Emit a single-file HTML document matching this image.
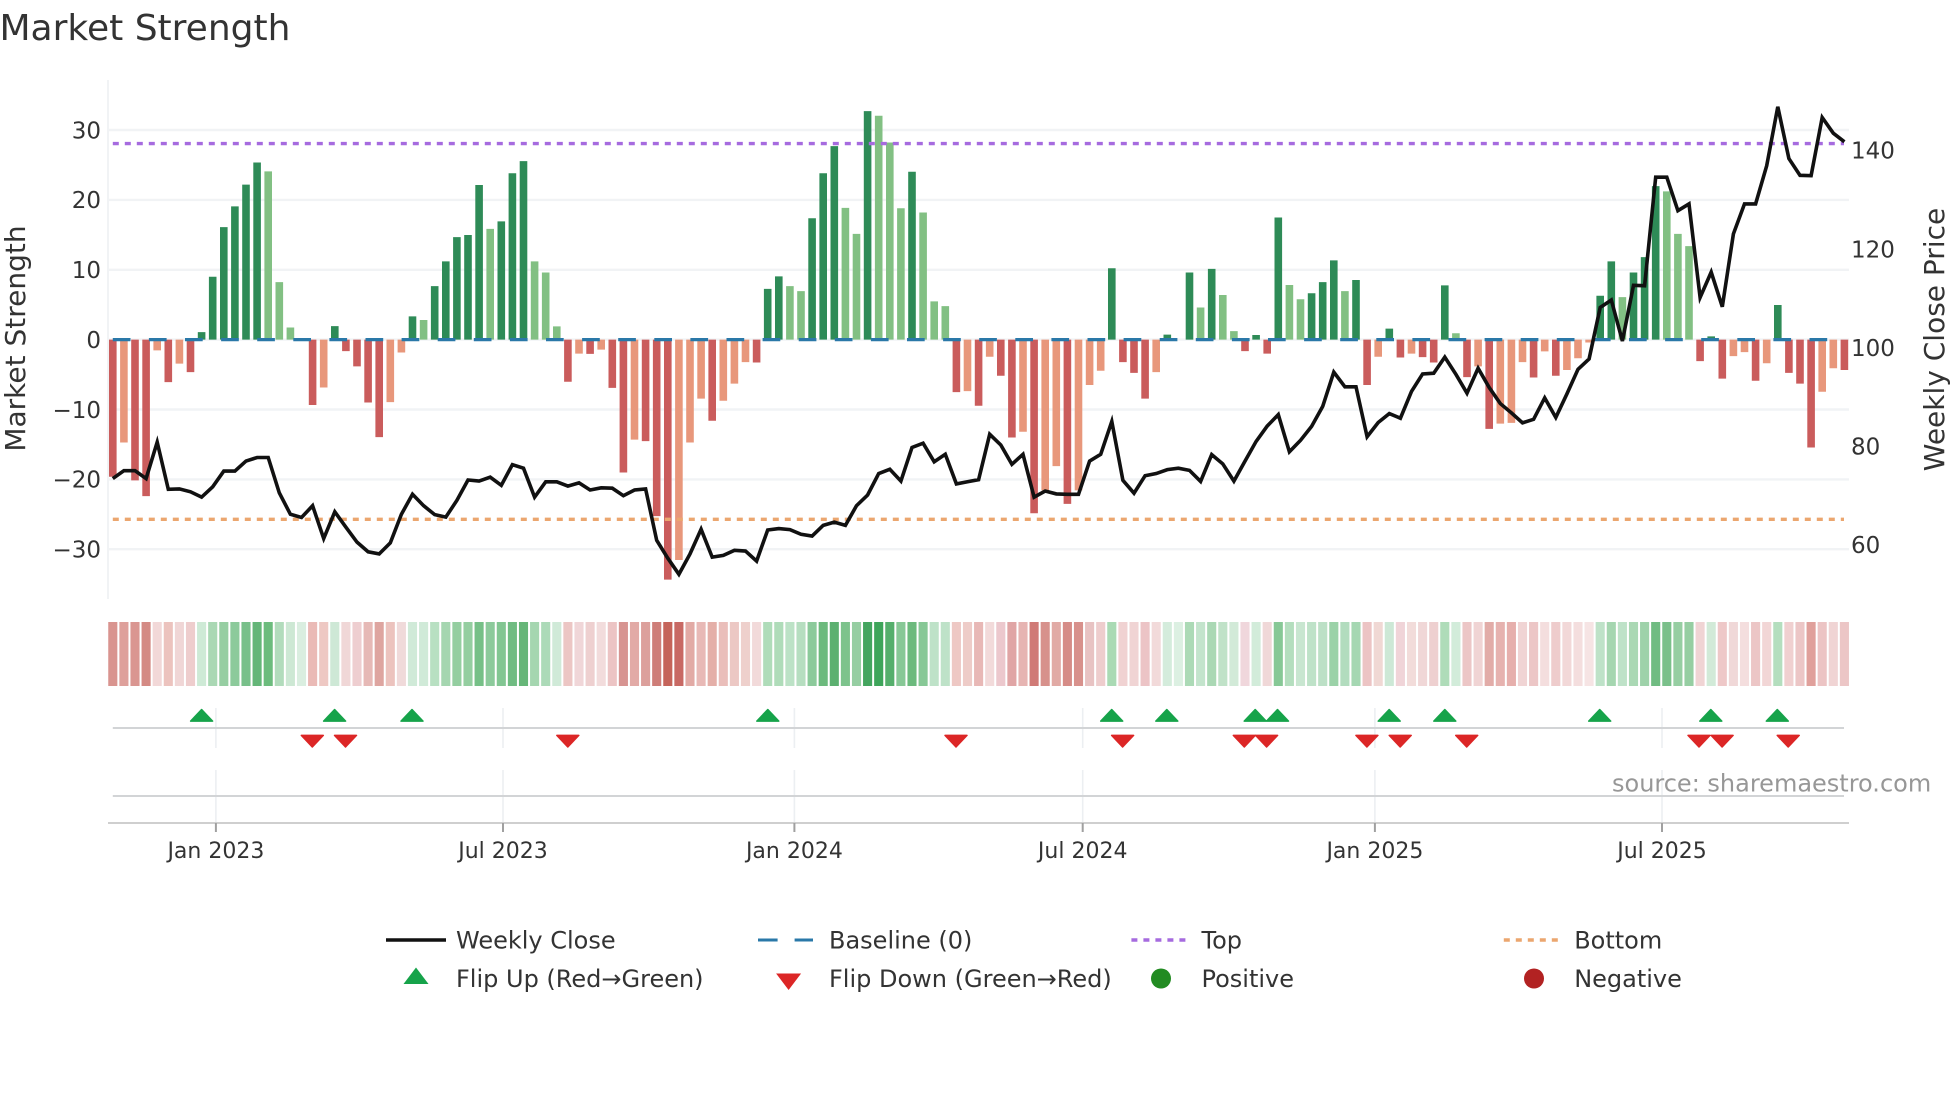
<!DOCTYPE html>
<html lang="en"><head><meta charset="utf-8"><title>Market Strength</title>
<style>
html,body{margin:0;padding:0;background:#fff}
svg{display:block}
text{font-family:"DejaVu Sans",sans-serif;fill:#333}
.t{font-size:23px}
.x{font-size:22px;text-anchor:middle}
.l{font-size:24px}
</style></head><body>
<svg width="1960" height="1102" viewBox="0 0 1960 1102" xmlns="http://www.w3.org/2000/svg">
<rect width="1960" height="1102" fill="#fff"/>
<text x="-0.5" y="40" style="font-size:36px">Market Strength</text>

<!-- grid -->
<path d="M108 130H1849M108 199.9H1849M108 269.8H1849M108 339.6H1849M108 409.5H1849M108 479.4H1849M108 549.2H1849" stroke="#f1f3f5" stroke-width="2.4" fill="none"/>
<path d="M108 80V599" stroke="#f1f3f5" stroke-width="2" fill="none"/>

<!-- bars -->
<g transform="matrix(11.1 0 0 .35714 112.8 60)" fill="none" stroke-width=".685">
<path stroke="#2e8b57" d="M8 783V762M9 783V607M10 783V468M11 783V410M12 783V349M13 783V287M20 783V745M27 783V718M29 783V633M30 783V564M31 783V496M32 783V490M33 783V350M35 783V452M36 783V317M37 783V283M59 783V641M60 783V606M63 783V443M64 783V317M65 783V241M68 783V143M72 783V313M90 783V583M95 783V769M97 783V595M99 783V585M103 783V770M105 783V441M108 783V653M109 783V622M110 783V561M112 783V616M115 783V752M120 783V631M134 783V660M135 783V564M137 783V595M138 783V552M139 783V353M144 783V774M150 783V686"/>
<path stroke="#82c083" d="M14 783V312M15 783V622M16 783V749M28 783V728M34 783V473M38 783V564M39 783V595M40 783V746M61 783V633M62 783V647M66 783V414M67 783V487M69 783V156M70 783V231M71 783V415M73 783V427M74 783V676M75 783V689M98 783V693M100 783V658M101 783V759M106 783V630M107 783V670M111 783V647M121 783V765M136 783V664M140 783V368M141 783V487M142 783V521"/>
<path stroke="#ca5c5c" d="M0 783V1167M2 783V1177M3 783V1221M5 783V902M7 783V874M18 783V966M21 783V815M22 783V858M23 783V959M24 783V1056M41 783V901M43 783V823M45 783V918M46 783V1155M48 783V1067M49 783V1277M50 783V1455M54 783V1010M58 783V847M76 783V930M78 783V968M80 783V884M81 783V1057M83 783V1269M86 783V1243M91 783V846M92 783V876M93 783V948M102 783V815M104 783V822M113 783V910M116 783V833M118 783V832M119 783V847M122 783V888M124 783V1033M128 783V889M130 783V884M143 783V843M145 783V892M148 783V898M151 783V876M152 783V906M153 783V1085M156 783V868"/>
<path stroke="#e8977b" d="M1 783V1071M4 783V813M6 783V850M19 783V917M25 783V958M26 783V819M42 783V822M44 783V811M47 783V1063M51 783V1400M52 783V1071M53 783V948M55 783V954M56 783V906M57 783V846M77 783V927M79 783V831M82 783V1041M84 783V1205M85 783V1137M87 783V1205M88 783V910M89 783V870M94 783V874M114 783V831M117 783V822M123 783V858M125 783V1018M126 783V1016M127 783V846M129 783V816M131 783V868M132 783V835M133 783V791M146 783V829M147 783V818M149 783V849M154 783V929M155 783V863"/>
</g>

<!-- reference lines -->
<path d="M112.8 339.6H1844" stroke="#2a78a8" stroke-width="3.2" stroke-dasharray="17.7 18.4" fill="none"/>
<path d="M112.8 143.6H1844" stroke="#a66bdf" stroke-width="3.4" stroke-dasharray="6 6" fill="none"/>
<path d="M112.8 519.3H1844" stroke="#eba66f" stroke-width="3.4" stroke-dasharray="6 6" fill="none"/>

<!-- price line -->
<g transform="matrix(11.1 0 0 .35714 112.8 60)">
<polyline fill="none" stroke="#111" stroke-width="3.6" stroke-linejoin="miter" vector-effect="non-scaling-stroke" points="0,1172 1,1150 2,1150 3,1172 4,1070 5,1202 6,1201 7,1209 8,1224 9,1195 10,1151 11,1151 12,1123 13,1113 14,1113 15,1212 16,1272 17,1281 18,1248 19,1340 20,1265 21,1308 22,1350 23,1377 24,1383 25,1352 26,1272 27,1216 28,1248 29,1273 30,1280 31,1233 32,1176 33,1179 34,1168 35,1191 36,1133 37,1143 38,1224 39,1181 40,1181 41,1193 42,1184 43,1204 44,1198 45,1199 46,1220 47,1204 48,1201 49,1345 50,1395 51,1440 52,1383 53,1314 54,1392 55,1387 56,1373 57,1375 58,1403 59,1316 60,1312 61,1315 62,1328 63,1333 64,1303 65,1294 66,1303 67,1248 68,1218 69,1158 70,1146 71,1179 72,1085 73,1073 74,1125 75,1104 76,1187 77,1181 78,1175 79,1048 80,1078 81,1132 82,1104 83,1224 84,1207 85,1215 86,1216 87,1216 88,1123 89,1104 90,1012 91,1177 92,1213 93,1164 94,1158 95,1147 96,1143 97,1149 98,1180 99,1105 100,1131 101,1179 102,1123 103,1068 104,1025 105,993 106,1097 107,1065 108,1026 109,970 110,874 111,915 112,915 113,1055 114,1015 115,990 116,1003 117,928 118,879 119,877 120,832 121,880 122,933 123,863 124,917 125,962 126,988 127,1016 128,1006 129,946 130,1001 131,935 132,866 133,837 134,693 135,672 136,787 137,631 138,632 139,328 140,328 141,422 142,403 143,665 144,594 145,691 146,487 147,403 148,403 149,296 150,131 151,276 152,323 153,324 154,161 155,205 156,229"/>
</g>

<!-- left ticks -->
<g class="t" text-anchor="end">
<text class="t" x="101" y="138.3">30</text>
<text class="t" x="101" y="208.2">20</text>
<text class="t" x="101" y="278.1">10</text>
<text class="t" x="101" y="347.9">0</text>
<text class="t" x="101" y="417.8">−10</text>
<text class="t" x="101" y="487.7">−20</text>
<text class="t" x="101" y="557.5">−30</text>
</g>
<!-- right ticks -->
<text class="t" x="1851" y="158.6">140</text>
<text class="t" x="1851" y="257.6">120</text>
<text class="t" x="1851" y="355.8">100</text>
<text class="t" x="1851" y="454.7">80</text>
<text class="t" x="1851" y="553">60</text>
<!-- axis titles -->
<text transform="translate(25 338.5) rotate(-90)" text-anchor="middle" style="font-size:28px">Market Strength</text>
<text transform="translate(1944 339.5) rotate(-90)" text-anchor="middle" style="font-size:28px">Weekly Close Price</text>

<!-- heat strip -->
<g transform="matrix(11.1 0 0 64 112.8 622)" fill="none" stroke-width=".82">
<path stroke="#d9948f" d="M0 0V1"/><path stroke="#dea09b" d="M1 0V1"/><path stroke="#da9691" d="M2 0V1"/><path stroke="#d48a84" d="M3 0V1"/><path stroke="#f2d8d8" d="M4 0V1"/><path stroke="#ecc3be" d="M5 0V1"/><path stroke="#f0d6d6" d="M6 0V1"/><path stroke="#eecdcd" d="M7 0V1"/>
<path stroke="#ceead6" d="M8 0V1"/><path stroke="#aad8b4" d="M9 0V1"/><path stroke="#96cea2" d="M10 0V1"/><path stroke="#8cca9b" d="M11 0V1"/><path stroke="#78c08a" d="M12 0V1"/><path stroke="#64b678" d="M13 0V1"/><path stroke="#6cbc7d" d="M14 0V1"/><path stroke="#b2dcbc" d="M15 0V1"/><path stroke="#cde8d4" d="M16 0V1"/><path stroke="#daeee0" d="M17 0V1"/>
<path stroke="#eabab6" d="M18 0V1"/><path stroke="#eec8c3" d="M19 0V1"/><path stroke="#cee8d6" d="M20 0V1"/><path stroke="#f0d7d7" d="M21 0V1"/><path stroke="#eeced0" d="M22 0V1"/><path stroke="#e6b9b6" d="M23 0V1"/><path stroke="#dea5a0" d="M24 0V1"/><path stroke="#ecc3be" d="M25 0V1"/><path stroke="#f0dada" d="M26 0V1"/>
<path stroke="#d0ead8" d="M27 0V1"/><path stroke="#d0ead8" d="M28 0V1"/><path stroke="#b8e0c2" d="M29 0V1"/><path stroke="#a5d6b0" d="M30 0V1"/><path stroke="#94cea0" d="M31 0V1"/><path stroke="#94cea0" d="M32 0V1"/><path stroke="#76c087" d="M33 0V1"/><path stroke="#8cca9b" d="M34 0V1"/><path stroke="#82c692" d="M35 0V1"/><path stroke="#70bc82" d="M36 0V1"/><path stroke="#66b678" d="M37 0V1"/><path stroke="#a5d6b0" d="M38 0V1"/><path stroke="#acdab8" d="M39 0V1"/><path stroke="#d0ead8" d="M40 0V1"/>
<path stroke="#ecc6c4" d="M41 0V1"/><path stroke="#f0d6d8" d="M42 0V1"/><path stroke="#eed0d0" d="M43 0V1"/><path stroke="#f2dcdc" d="M44 0V1"/><path stroke="#ecc4c4" d="M45 0V1"/><path stroke="#d79491" d="M46 0V1"/><path stroke="#e2aaa6" d="M47 0V1"/><path stroke="#dca09c" d="M48 0V1"/><path stroke="#ce7d78" d="M49 0V1"/><path stroke="#c5645a" d="M50 0V1"/><path stroke="#c86964" d="M51 0V1"/><path stroke="#e2aaa5" d="M52 0V1"/><path stroke="#e8b9b6" d="M53 0V1"/><path stroke="#e4afa8" d="M54 0V1"/><path stroke="#eabeba" d="M55 0V1"/><path stroke="#ecc8c4" d="M56 0V1"/><path stroke="#eed0cc" d="M57 0V1"/><path stroke="#f2dada" d="M58 0V1"/>
<path stroke="#afdcb9" d="M59 0V1"/><path stroke="#afdcb9" d="M60 0V1"/><path stroke="#bce2c6" d="M61 0V1"/><path stroke="#b6dec0" d="M62 0V1"/><path stroke="#8cca9b" d="M63 0V1"/><path stroke="#6cba7d" d="M64 0V1"/><path stroke="#5cb070" d="M65 0V1"/><path stroke="#7dc38c" d="M66 0V1"/><path stroke="#96cea2" d="M67 0V1"/><path stroke="#44a55f" d="M68 0V1"/><path stroke="#3ea55a" d="M69 0V1"/><path stroke="#55af6c" d="M70 0V1"/><path stroke="#87c896" d="M71 0V1"/><path stroke="#6cba7d" d="M72 0V1"/><path stroke="#87c896" d="M73 0V1"/><path stroke="#bee2c8" d="M74 0V1"/><path stroke="#bee2c8" d="M75 0V1"/>
<path stroke="#eec8c4" d="M76 0V1"/><path stroke="#eeccc8" d="M77 0V1"/><path stroke="#e8b8b6" d="M78 0V1"/><path stroke="#f2dada" d="M79 0V1"/><path stroke="#ecc8cd" d="M80 0V1"/><path stroke="#e0a5a5" d="M81 0V1"/><path stroke="#e6b4b2" d="M82 0V1"/><path stroke="#d07a76" d="M83 0V1"/><path stroke="#d7918c" d="M84 0V1"/><path stroke="#e1aaa5" d="M85 0V1"/><path stroke="#d68c87" d="M86 0V1"/><path stroke="#d8918c" d="M87 0V1"/><path stroke="#e8c3c3" d="M88 0V1"/><path stroke="#eecdcd" d="M89 0V1"/>
<path stroke="#aadab4" d="M90 0V1"/><path stroke="#f0d2d2" d="M91 0V1"/><path stroke="#f0d4d4" d="M92 0V1"/><path stroke="#ecc4c6" d="M93 0V1"/><path stroke="#f2dada" d="M94 0V1"/>
<path stroke="#d4ecdc" d="M95 0V1"/><path stroke="#dcf0e2" d="M96 0V1"/><path stroke="#acdab6" d="M97 0V1"/><path stroke="#c3e4cc" d="M98 0V1"/><path stroke="#aad8b4" d="M99 0V1"/><path stroke="#c0e2c8" d="M100 0V1"/><path stroke="#d2ead8" d="M101 0V1"/>
<path stroke="#f0d7dc" d="M102 0V1"/><path stroke="#d2ecda" d="M103 0V1"/><path stroke="#f0d8d8" d="M104 0V1"/><path stroke="#87c896" d="M105 0V1"/><path stroke="#b4debe" d="M106 0V1"/><path stroke="#c8e6d0" d="M107 0V1"/><path stroke="#bee2c8" d="M108 0V1"/><path stroke="#bce0c6" d="M109 0V1"/><path stroke="#9bd2a8" d="M110 0V1"/><path stroke="#b2dcbe" d="M111 0V1"/><path stroke="#a5d7b2" d="M112 0V1"/>
<path stroke="#ecc4c4" d="M113 0V1"/><path stroke="#f0d8d4" d="M114 0V1"/><path stroke="#cde8d6" d="M115 0V1"/><path stroke="#f0d4d8" d="M116 0V1"/><path stroke="#f2dcda" d="M117 0V1"/><path stroke="#f0d7d7" d="M118 0V1"/><path stroke="#eed0d0" d="M119 0V1"/>
<path stroke="#afdcb9" d="M120 0V1"/><path stroke="#d2ecda" d="M121 0V1"/><path stroke="#ecc6c6" d="M122 0V1"/><path stroke="#f0d4d4" d="M123 0V1"/><path stroke="#e2aca8" d="M124 0V1"/><path stroke="#e6b2af" d="M125 0V1"/><path stroke="#e6afac" d="M126 0V1"/><path stroke="#f0d4d4" d="M127 0V1"/><path stroke="#ecc6c6" d="M128 0V1"/><path stroke="#f4dede" d="M129 0V1"/><path stroke="#eecccc" d="M130 0V1"/><path stroke="#f2d8d8" d="M131 0V1"/><path stroke="#f4dede" d="M132 0V1"/><path stroke="#f6e4e4" d="M133 0V1"/>
<path stroke="#bee2c8" d="M134 0V1"/><path stroke="#a5d6b0" d="M135 0V1"/><path stroke="#bee2c8" d="M136 0V1"/><path stroke="#aad8b4" d="M137 0V1"/><path stroke="#9ed2aa" d="M138 0V1"/><path stroke="#70bc82" d="M139 0V1"/><path stroke="#7ac08a" d="M140 0V1"/><path stroke="#96cea2" d="M141 0V1"/><path stroke="#96cea2" d="M142 0V1"/>
<path stroke="#f0d4d4" d="M143 0V1"/><path stroke="#d2ead8" d="M144 0V1"/><path stroke="#eec8c8" d="M145 0V1"/><path stroke="#f0d8d8" d="M146 0V1"/><path stroke="#f4dede" d="M147 0V1"/><path stroke="#ecc6c6" d="M148 0V1"/><path stroke="#f2d6d6" d="M149 0V1"/><path stroke="#b4debe" d="M150 0V1"/><path stroke="#f0d0d0" d="M151 0V1"/><path stroke="#ecc6c6" d="M152 0V1"/><path stroke="#e0a09b" d="M153 0V1"/><path stroke="#ecc4c4" d="M154 0V1"/><path stroke="#f0d4d4" d="M155 0V1"/><path stroke="#ecc6c6" d="M156 0V1"/>
</g>

<!-- lower panels -->
<path d="M215.9 708V748M503 708V748M794.4 708V748M1082.7 708V748M1374.9 708V748M1662 708V748M215.9 770V823M503 770V823M794.4 770V823M1082.7 770V823M1374.9 770V823M1662 770V823" stroke="#eceff2" stroke-width="1.6" fill="none"/>
<path d="M112.8 728H1844M112.8 796H1844" stroke="#d2d4d6" stroke-width="2" fill="none"/>
<path d="M108 823H1849" stroke="#cfcfcf" stroke-width="2" fill="none"/>
<path d="M215.9 823V832M503 823V832M794.4 823V832M1082.7 823V832M1374.9 823V832M1662 823V832" stroke="#a0a0a0" stroke-width="2" fill="none"/>

<path fill="#16a34a" stroke="#16a34a" stroke-width="1.5" stroke-linejoin="round" d="M201.6 709.5l11 11.6h-22zM334.6 709.5l11 11.6h-22zM412 709.5l11 11.6h-22zM767.8 709.5l11 11.6h-22zM1111.7 709.5l11 11.6h-22zM1166.8 709.5l11 11.6h-22zM1255.2 709.5l11 11.6h-22zM1277.5 709.5l11 11.6h-22zM1389.2 709.5l11 11.6h-22zM1444.8 709.5l11 11.6h-22zM1599.7 709.5l11 11.6h-22zM1710.8 709.5l11 11.6h-22zM1777.3 709.5l11 11.6h-22z"/>
<path fill="#dc2626" stroke="#dc2626" stroke-width="1.5" stroke-linejoin="round" d="M312.3 747l11-11.6h-22zM345.5 747l11-11.6h-22zM567.8 747l11-11.6h-22zM956 747l11-11.6h-22zM1122.6 747l11-11.6h-22zM1244.3 747l11-11.6h-22zM1266.6 747l11-11.6h-22zM1366.9 747l11-11.6h-22zM1400.2 747l11-11.6h-22zM1466.7 747l11-11.6h-22zM1699 747l11-11.6h-22zM1722.1 747l11-11.6h-22zM1788.2 747l11-11.6h-22z"/>

<text x="1612" y="791.5" style="font-size:24px;fill:#979797">source: sharemaestro.com</text>

<text class="x" x="215.9" y="858">Jan 2023</text>
<text class="x" x="503" y="858">Jul 2023</text>
<text class="x" x="794.4" y="858">Jan 2024</text>
<text class="x" x="1082.7" y="858">Jul 2024</text>
<text class="x" x="1374.9" y="858">Jan 2025</text>
<text class="x" x="1662" y="858">Jul 2025</text>

<!-- legend -->
<path d="M386 940H446" stroke="#111" stroke-width="3.4" fill="none"/>
<path d="M758 940H813" stroke="#2a78a8" stroke-width="3" stroke-dasharray="19.6 17" fill="none"/>
<path d="M1131.4 940H1186" stroke="#a66bdf" stroke-width="3.4" stroke-dasharray="6 6" fill="none"/>
<path d="M1503.8 940H1559" stroke="#eba66f" stroke-width="3.4" stroke-dasharray="6 6" fill="none"/>
<path fill="#16a34a" d="M416 967.5l12.5 16.5h-25z"/>
<path fill="#dc2626" d="M788.6 990l12.5-16.5h-25z"/>
<circle cx="1161" cy="978.5" r="10" fill="#228b22"/>
<circle cx="1534" cy="978.5" r="10" fill="#b22222"/>
<text class="l" x="456" y="948.5">Weekly Close</text>
<text class="l" x="829" y="948.5">Baseline (0)</text>
<text class="l" x="1201.5" y="948.5">Top</text>
<text class="l" x="1574.2" y="948.5">Bottom</text>
<text class="l" x="456" y="987">Flip Up (Red→Green)</text>
<text class="l" x="829" y="987">Flip Down (Green→Red)</text>
<text class="l" x="1201.5" y="987">Positive</text>
<text class="l" x="1574.2" y="987">Negative</text>
</svg>
</body></html>
